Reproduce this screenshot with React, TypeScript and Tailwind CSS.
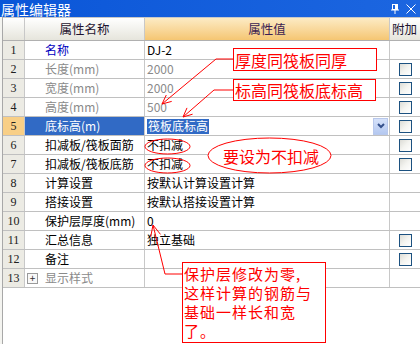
import React from "react";

type Row = {
  n: number;
  name: string;
  nameColor: string;
  value: string;
  valueColor: string;
  check: boolean;
  selected?: boolean;
  plus?: boolean;
};

const rows: Row[] = [
  { n: 1, name: "名称", nameColor: "text-[#0000c0]", value: "DJ-2", valueColor: "text-black", check: false },
  { n: 2, name: "长度(mm)", nameColor: "text-[#8a8a8a]", value: "2000", valueColor: "text-[#8a8a8a]", check: true },
  { n: 3, name: "宽度(mm)", nameColor: "text-[#8a8a8a]", value: "2000", valueColor: "text-[#8a8a8a]", check: true },
  { n: 4, name: "高度(mm)", nameColor: "text-[#8a8a8a]", value: "500", valueColor: "text-[#8a8a8a]", check: true },
  { n: 5, name: "底标高(m)", nameColor: "text-white", value: "筏板底标高", valueColor: "text-white", check: true, selected: true },
  { n: 6, name: "扣减板/筏板面筋", nameColor: "text-black", value: "不扣减", valueColor: "text-black", check: true },
  { n: 7, name: "扣减板/筏板底筋", nameColor: "text-black", value: "不扣减", valueColor: "text-black", check: true },
  { n: 8, name: "计算设置", nameColor: "text-black", value: "按默认计算设置计算", valueColor: "text-black", check: false },
  { n: 9, name: "搭接设置", nameColor: "text-black", value: "按默认搭接设置计算", valueColor: "text-black", check: false },
  { n: 10, name: "保护层厚度(mm)", nameColor: "text-black", value: "0", valueColor: "text-black", check: false },
  { n: 11, name: "汇总信息", nameColor: "text-black", value: "独立基础", valueColor: "text-black", check: true },
  { n: 12, name: "备注", nameColor: "text-black", value: "", valueColor: "text-black", check: true },
  { n: 13, name: "显示样式", nameColor: "text-[#8a8a8a]", value: "", valueColor: "text-black", check: false, plus: true },
];

const font = { fontFamily: '"Noto Sans CJK SC", "Noto Sans", sans-serif' };

function CheckBox() {
  return (
    <div className="w-[13px] h-[13px] border border-[#1c5180] bg-gradient-to-br from-[#dcdcd6] via-[#f4f4f0] to-[#ffffff]" />
  );
}

export default function App() {
  return (
    <div
      className="relative w-[420px] h-[344px] overflow-hidden bg-white text-[12px] leading-none"
      style={font}
    >
      {/* Title bar */}
      <div className="h-[17px] flex items-center bg-gradient-to-r from-[#0a56d8] to-[#1c66e0] text-white">
        <span className="pl-[1px] text-[14px] leading-none">属性编辑器</span>
        <div className="ml-auto flex items-center gap-[7px] pr-[4px]">
          <svg width="8" height="10" viewBox="0 0 8 10">
            <rect x="1.5" y="0.5" width="5" height="5" fill="none" stroke="white" />
            <rect x="4" y="1" width="2" height="4" fill="white" />
            <line x1="0" y1="6" x2="8" y2="6" stroke="white" />
            <line x1="4" y1="6" x2="4" y2="10" stroke="white" />
          </svg>
          <svg width="10" height="10" viewBox="0 0 10 10">
            <line x1="0.5" y1="0.5" x2="9.5" y2="9.5" stroke="white" strokeWidth="1" />
            <line x1="9.5" y1="0.5" x2="0.5" y2="9.5" stroke="white" strokeWidth="1" />
          </svg>
        </div>
      </div>

      {/* Grid area */}
      <div className="flex h-[327px]">
        <div className="w-[2px] bg-[#f4f4f0]" />
        <div className="w-[1px] bg-[#a8a8a8]" />
        <div className="flex-1 flex flex-col">
          <div className="h-[1px] bg-[#c8c8c8]" />
          {/* Header */}
          <div className="flex h-[23px] border-b border-[#b0b0b0]">
            <div className="w-[22px] border-r border-[#c8c8c8] bg-gradient-to-b from-[#ffffff] to-[#e6e5dc]" />
            <div className="w-[120px] border-r border-[#c8c8c8] bg-gradient-to-b from-[#ffffff] to-[#e6e5dc] flex items-center justify-center text-[#1e1430] text-[12.5px]">
              属性名称
            </div>
            <div className="w-[245px] border-r border-[#c8c8c8] bg-gradient-to-b from-[#fcebc4] to-[#f5c672] flex items-center justify-center text-[#3c1e52] text-[12.5px]">
              属性值
            </div>
            <div className="flex-1 bg-gradient-to-b from-[#ffffff] to-[#e6e5dc] flex items-center pl-[2px] text-[#1e1430] text-[12.5px] whitespace-nowrap overflow-hidden">
              附加
            </div>
          </div>
          {/* Rows */}
          {rows.map((r) => (
            <div key={r.n} className="flex h-[19px] border-b border-[#c0c0c0]">
              <div
                className={`w-[22px] border-r border-[#c8c8c8] flex items-center justify-center text-[12px] text-[#202020] ${
                  r.selected ? "bg-[#f8cf86]" : "bg-[#ecebe4]"
                }`}
                style={{ fontFamily: '"Liberation Serif", serif' }}
              >
                {r.n}
              </div>
              <div
                className={`w-[120px] border-r border-[#c8c8c8] flex items-center ${
                  r.selected ? "bg-[#316ac5]" : "bg-white"
                } ${r.plus ? "pl-[2px]" : "pl-[20px]"} ${r.nameColor} whitespace-nowrap`}
              >
                {r.plus && (
                  <div className="w-[11px] h-[11px] border border-[#9a9a9a] flex items-center justify-center text-[#303030] text-[10px] mr-[7px] bg-[#f8f8f8]">
                    +
                  </div>
                )}
                {r.name}
              </div>
              <div className="w-[245px] border-r border-[#c8c8c8] flex items-center bg-white pl-[2px] whitespace-nowrap">
                {r.selected ? (
                  <>
                    <span className="bg-[#316ac5] text-white px-[1px] h-[15px] flex items-center">{r.value}</span>
                    <div className="ml-auto mr-[1px] w-[15px] h-[17px] bg-gradient-to-b from-[#d6e2fa] to-[#b4c8f0] border border-[#b8c8ec] flex items-center justify-center">
                      <svg width="8" height="6" viewBox="0 0 8 6">
                        <path d="M1 1 L4 4 L7 1" fill="none" stroke="#34508c" strokeWidth="2" />
                      </svg>
                    </div>
                  </>
                ) : (
                  <span className={r.valueColor}>{r.value}</span>
                )}
              </div>
              <div className="flex-1 flex items-center justify-center bg-white">
                {r.check && <CheckBox />}
              </div>
            </div>
          ))}
          <div className="flex-1 bg-white" />
        </div>
      </div>

      {/* Annotation overlay */}
      <svg className="absolute left-0 top-0" width="420" height="344" viewBox="0 0 420 344">
        <g stroke="#ff0000" strokeWidth="1" fill="none">
          <polyline points="233,59 216,59 162,104" />
          <polyline points="171.7,101.4 162,104 166.3,95" />
          <polyline points="233,90 214,90 183,117" />
          <polyline points="192.6,114.2 183,117 187,107.9" />
          <polyline points="182,274 165,274 153,225" />
          <polyline points="150.7,236.8 153,225 160.5,234.4" />
          <ellipse cx="167.5" cy="146.5" rx="22.5" ry="7.5" />
          <ellipse cx="167.5" cy="165.5" rx="22.5" ry="7.5" />
          <ellipse cx="269.5" cy="155.5" rx="61.5" ry="17.5" fill="white" />
        </g>
      </svg>

      <div className="absolute left-[233px] top-[48px] w-[144px] h-[23px] border border-[#ff0000] bg-white text-[#ff0000] text-[16px] leading-none flex items-center pl-[1px] whitespace-nowrap">
        厚度同筏板同厚
      </div>
      <div className="absolute left-[233px] top-[79px] w-[143px] h-[22px] border border-[#ff0000] bg-white text-[#ff0000] text-[16px] leading-none flex items-center pl-[1px] whitespace-nowrap">
        标高同筏板底标高
      </div>
      <div className="absolute left-[216px] top-[146px] w-[110px] h-[20px] text-[#ff0000] text-[16px] leading-none flex items-center justify-center whitespace-nowrap">
        要设为不扣减
      </div>
      <div className="absolute left-[182px] top-[262px] w-[144px] h-[81px] border border-[#ff0000] bg-white text-[#ff0000] text-[15px] tracking-[1px] leading-[19px] pl-[1px] pt-[1px]">
        <div className="whitespace-nowrap">保护层修改为零,</div>
        <div className="whitespace-nowrap">这样计算的钢筋与</div>
        <div className="whitespace-nowrap">基础一样长和宽</div>
        <div className="whitespace-nowrap">了。</div>
      </div>
    </div>
  );
}
